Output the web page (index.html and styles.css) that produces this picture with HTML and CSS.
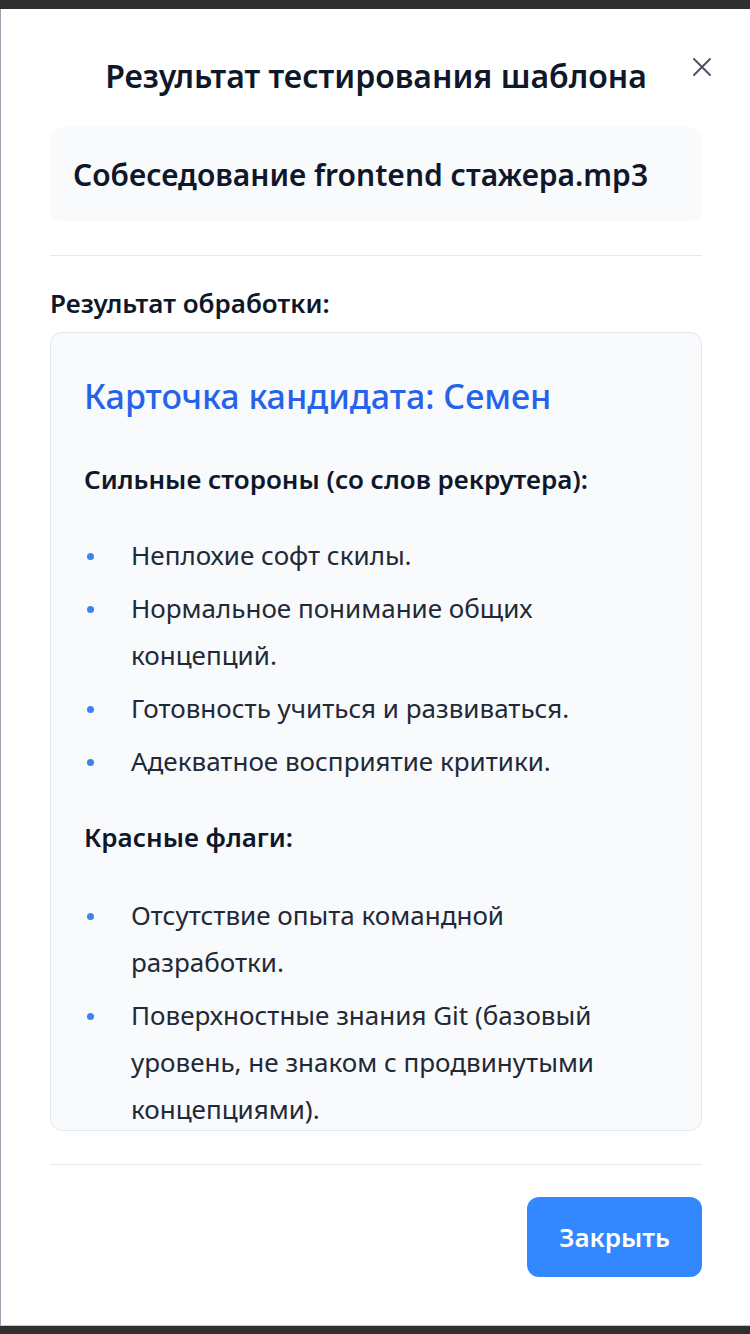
FILE: index.html
```html
<!DOCTYPE html>
<html lang="ru">
<head>
    <meta charset="UTF-8">
    <meta name="viewport" content="width=device-width, initial-scale=1.0">
    <title>Результат тестирования шаблона</title>
    <link rel="stylesheet" href="styles.css">
</head>
<body>

    <div class="modal">
        <button type="button" class="modal-close" aria-label="Закрыть">
            <svg width="20" height="20" viewBox="0 0 20 20" fill="none" stroke="currentColor" stroke-width="2" stroke-linecap="round">
                <path d="M2 2 L18 18 M18 2 L2 18"/>
            </svg>
        </button>

        <h1 class="modal-title">Результат тестирования шаблона</h1>

        <div class="file-box">Собеседование frontend стажера.mp3</div>

        <div class="section">
            <h2 class="section-label">Результат обработки:</h2>
            <div class="result">
                <h3>Карточка кандидата: Семен</h3>

                <h4>Сильные стороны (со слов рекрутера):</h4>
                <ul>
                    <li>Неплохие софт скилы.</li>
                    <li>Нормальное понимание общих концепций.</li>
                    <li>Готовность учиться и развиваться.</li>
                    <li>Адекватное восприятие критики.</li>
                </ul>

                <h4 class="flags">Красные флаги:</h4>
                <ul class="flags-list">
                    <li>Отсутствие опыта командной разработки.</li>
                    <li>Поверхностные знания Git (базовый уровень, не знаком с продвинутыми концепциями).</li>
                </ul>
            </div>
        </div>

        <div class="modal-footer">
            <button type="button" class="btn-close">Закрыть</button>
        </div>
    </div>

</body>
</html>
```

FILE: styles.css
```css
body {
    margin: 0;
    background-color: #2f2f2f;
    font-family: "Noto Sans", "Open Sans", sans-serif;
    color: #1f2937;
}
.modal {
    position: relative;
    box-sizing: border-box;
    height: 1317px;
    margin-top: 9px;
    padding: 0 48px 0 49px;
    background-color: #fff;
    border-left: 1px solid #9ca3af;
    border-bottom: 1px solid #c4c8ce;
}
.modal-close {
    position: absolute;
    top: 48px;
    right: 38px;
    width: 20px;
    height: 20px;
    padding: 0;
    border: none;
    background: none;
    color: #4b5563;
    cursor: pointer;
}
.modal-title {
    margin: 0;
    padding-top: 46px;
    font-size: 32px;
    line-height: 42px;
    font-weight: 600;
    text-align: center;
    color: #0f172a;
}
.file-box {
    margin-top: 30px;
    height: 94px;
    padding: 0 23px;
    display: flex;
    align-items: center;
    background-color: #f8fafc;
    border-radius: 12px;
    font-size: 30px;
    font-weight: 600;
    color: #0f172a;
}
.section {
    margin-top: 34px;
    padding-top: 31px;
    border-top: 1px solid #e5e7eb;
}
.section-label {
    margin: 0 0 13px;
    font-size: 26px;
    line-height: 32px;
    font-weight: 600;
    color: #0f172a;
}
.result {
    box-sizing: border-box;
    height: 799px;
    overflow: hidden;
    padding: 32px 33px;
    background-color: #f8fafc;
    border: 1px solid #e2e8f0;
    border-radius: 12px;
}
.result h3 {
    margin: 9px 0 0;
    font-size: 34px;
    line-height: 44px;
    font-weight: 500;
    color: #2563eb;
}
.result h4 {
    margin: 45px 0 0;
    font-size: 26px;
    line-height: 32px;
    font-weight: 600;
    color: #0f172a;
}
.result h4.flags {
    margin-top: 36px;
}
.result ul {
    list-style: none;
    margin: 37px 0 0;
    padding: 0;
}
.result ul.flags-list {
    margin-top: 39px;
}
.result li {
    position: relative;
    padding: 0 40px 0 47px;
    margin-bottom: 6px;
    font-size: 26px;
    line-height: 47px;
}
.result li::before {
    content: "";
    position: absolute;
    left: 3px;
    top: 21px;
    width: 7px;
    height: 7px;
    border-radius: 50%;
    background-color: #3b82f6;
}
.modal-footer {
    margin-top: 33px;
    padding-top: 32px;
    border-top: 1px solid #e5e7eb;
    display: flex;
    justify-content: flex-end;
}
.btn-close {
    width: 175px;
    height: 80px;
    border: none;
    border-radius: 12px;
    background-color: #3388ff;
    color: #fff;
    font-family: inherit;
    font-size: 26px;
    font-weight: 600;
    cursor: pointer;
}
.btn-close:hover {
    background-color: #2a76e6;
}
```
